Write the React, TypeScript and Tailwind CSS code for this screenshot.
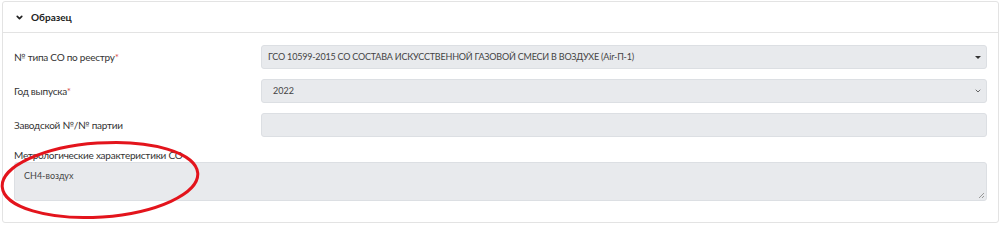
import { ChevronDown } from 'lucide-react';

const font = { fontFamily: 'Lato, "Noto Sans", sans-serif' };

const Label = ({ text, required }: { text: string; required?: boolean }) => (
  <div className="w-[247px] shrink-0 text-[10px] tracking-[-0.25px] text-[#333]">
    {text}
    {required && <span className="text-[#d9534f]">*</span>}
  </div>
);

export default function App() {
  return (
    <div className="relative h-[236px] w-[1000px] bg-white" style={font}>
      <div className="ml-[2px] mt-[1px] w-[997px] rounded-[3px] border border-[#e3e3e3] bg-white">
        {/* Header */}
        <div className="flex h-[31px] items-center gap-[7px] border-b border-[#e3e3e3] pl-[12px]">
          <ChevronDown className="h-[9px] w-[9px] text-[#222]" strokeWidth={4.5} />
          <span className="text-[10px] font-bold text-[#222]">Образец</span>
        </div>

        <div className="flex flex-col px-[11px] pt-[12px] pb-[21px]">
          <div className="flex h-[24px] items-center">
            <Label text="№ типа СО по реестру" required />
            <div className="flex h-[24px] flex-1 items-center justify-between rounded-[3px] border border-[#dcdfe3] bg-[#e8eaed] pl-[6px] pr-[5px] text-[9px] tracking-[-0.2px] text-[#444]">
              <span>ГСО 10599-2015 СО СОСТАВА ИСКУССТВЕННОЙ ГАЗОВОЙ СМЕСИ В ВОЗДУХЕ (Air-П-1)</span>
              <span className="h-0 w-0 border-x-[3px] border-t-[3px] border-x-transparent border-t-[#333]" />
            </div>
          </div>

          <div className="mt-[10px] flex h-[24px] items-center">
            <Label text="Год выпуска" required />
            <div className="flex h-[24px] flex-1 items-center justify-between rounded-[3px] border border-[#dcdfe3] bg-[#e8eaed] pl-[11px] pr-[4px] text-[9px] text-[#444]">
              <span>2022</span>
              <ChevronDown className="h-[8px] w-[8px] text-[#666]" strokeWidth={3} />
            </div>
          </div>

          <div className="mt-[10px] flex h-[24px] items-center">
            <Label text="Заводской №/№ партии" />
            <div className="h-[24px] flex-1 rounded-[3px] border border-[#dcdfe3] bg-[#e8eaed]" />
          </div>

          <div className="mt-[12px] text-[10px] leading-[12px] tracking-[-0.25px] text-[#333]">Метрологические характеристики СО</div>
          <div className="relative mt-[1px] h-[39px] rounded-[3px] border border-[#dcdfe3] bg-[#e8eaed] px-[9px] pt-[6px] text-[9px] text-[#444]">
            CH4-воздух
            <svg className="absolute bottom-[1px] right-[1px]" width="7" height="7" viewBox="0 0 7 7">
              <path d="M6 1 L1 6 M6 4 L4 6" stroke="#999" strokeWidth="1" />
            </svg>
          </div>
        </div>
      </div>

      {/* red annotation ellipse */}
      <svg className="pointer-events-none absolute left-0 top-0" width="1000" height="236">
        <ellipse cx="100" cy="179" rx="98" ry="37" transform="rotate(-4 100 179)" fill="none" stroke="#e3141c" strokeWidth="3" />
      </svg>
    </div>
  );
}
